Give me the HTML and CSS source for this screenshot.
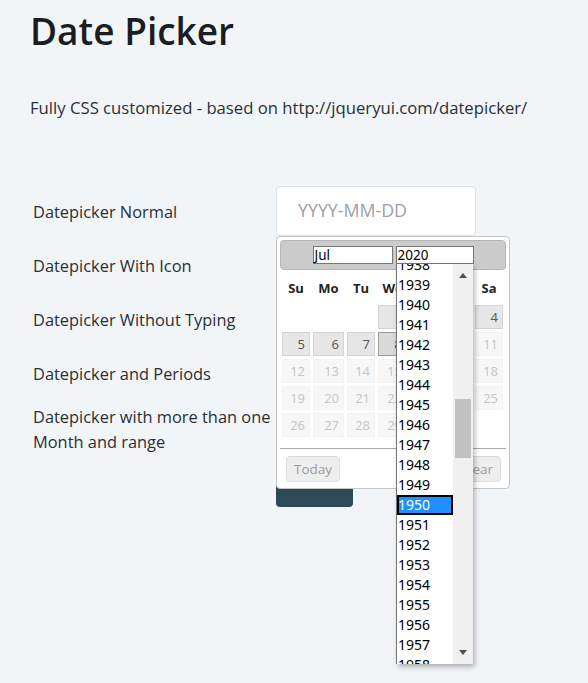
FILE: index.html
```html
<!DOCTYPE html>
<html lang="en">
<head>
<meta charset="utf-8">
<title>Date Picker</title>
<link rel="stylesheet" href="styles.css">
</head>
<body>
<div class="page">
  <h1 class="title">Date Picker</h1>
  <p class="lead">Fully CSS customized - based on http://jqueryui.com/datepicker/</p>

  <form class="form">
    <div class="row">
      <label class="label">Datepicker Normal</label>
      <div class="field">
        <input class="input" type="text" placeholder="YYYY-MM-DD">
        <div class="datepicker">
          <div class="dp-header">
            <span class="dp-select month">Jul</span>
            <span class="dp-select year">2020</span>
          </div>
          <div class="dp-grid dp-dow">
            <span>Su</span><span>Mo</span><span>Tu</span><span>We</span><span>Th</span><span>Fr</span><span>Sa</span>
          </div>
          <div class="dp-grid dp-days">
            <span class="empty"></span><span class="empty"></span><span class="empty"></span>
            <a class="day">1</a><a class="day">2</a><a class="day">3</a><a class="day">4</a>
            <a class="day">5</a><a class="day">6</a><a class="day">7</a><a class="day active">8</a><a class="day off">9</a><a class="day off">10</a><a class="day off">11</a>
            <a class="day off">12</a><a class="day off">13</a><a class="day off">14</a><a class="day off">15</a><a class="day off">16</a><a class="day off">17</a><a class="day off">18</a>
            <a class="day off">19</a><a class="day off">20</a><a class="day off">21</a><a class="day off">22</a><a class="day off">23</a><a class="day off">24</a><a class="day off">25</a>
            <a class="day off">26</a><a class="day off">27</a><a class="day off">28</a><a class="day off">29</a><a class="day off">30</a><a class="day off">31</a><span class="empty"></span>
          </div>
          <div class="dp-pane">
            <button type="button" class="dp-btn">Today</button>
            <button type="button" class="dp-btn">Clear</button>
          </div>

          <div class="dropdown">
            <div class="dd-items">
              <div class="dd-inner">
                <div class="opt">1938</div><div class="opt">1939</div><div class="opt">1940</div><div class="opt">1941</div>
                <div class="opt">1942</div><div class="opt">1943</div><div class="opt">1944</div><div class="opt">1945</div>
                <div class="opt">1946</div><div class="opt">1947</div><div class="opt">1948</div><div class="opt">1949</div>
                <div class="opt selected">1950</div><div class="opt">1951</div><div class="opt">1952</div><div class="opt">1953</div>
                <div class="opt">1954</div><div class="opt">1955</div><div class="opt">1956</div><div class="opt">1957</div>
                <div class="opt">1958</div>
              </div>
            </div>
            <div class="dd-track">
              <span class="arrow up"></span>
              <span class="thumb"></span>
              <span class="arrow down"></span>
            </div>
          </div>
        </div>
      </div>
    </div>
    <div class="row">
      <label class="label">Datepicker With Icon</label>
    </div>
    <div class="row">
      <label class="label">Datepicker Without Typing</label>
    </div>
    <div class="row">
      <label class="label">Datepicker and Periods</label>
    </div>
    <div class="row multi">
      <label class="label">Datepicker with more than one Month and range</label>
    </div>
    <div class="actions">
      <button type="button" class="save">Save</button>
    </div>
  </form>
</div>
</body>
</html>
```

FILE: styles.css
```css
* { box-sizing: border-box; }

html, body {
  min-height: 100%;
}

body {
  margin: 0;
  background: #f2f5f8;
  font-family: "Open Sans", "Noto Sans", sans-serif;
  color: #212529;
}

.page {
  min-height: 683px;
  padding: 7px 30px 0;
}

.title {
  margin: 0;
  font-size: 37px;
  line-height: 48px;
  font-weight: 600;
  color: #1b1e21;
}

.lead {
  margin: 41px 0 0;
  font-size: 16.7px;
  line-height: 24px;
  color: #2a2f36;
}

.form {
  margin-top: 64px;
}

.row {
  display: flex;
  align-items: center;
  height: 54px;
}

.row.multi {
  height: auto;
  align-items: flex-start;
  padding-top: 4px;
}

.label {
  width: 246px;
  padding-left: 3px;
  font-size: 16.4px;
  line-height: 25px;
  color: #2a2f36;
}

.field {
  position: relative;
  width: 200px;
  height: 50px;
}

.input {
  display: block;
  width: 200px;
  height: 50px;
  border: 1px solid #dde2e7;
  border-radius: 4px;
  background: #fff;
  padding: 0 0 2px 21px;
  font-family: inherit;
  font-size: 17.8px;
  color: #495057;
  outline: none;
}

.input::placeholder {
  color: #9aa1a8;
}

/* ---------- datepicker ---------- */
.datepicker {
  position: absolute;
  top: 100%;
  left: 0;
  width: 234px;
  height: 253px;
  padding: 3px;
  background: #fff;
  border: 1px solid #c5c5c5;
  border-radius: 4px;
  z-index: 5;
}

.dp-header {
  display: flex;
  justify-content: center;
  align-items: center;
  gap: 3px;
  height: 30px;
  background: #cbcbcb;
  border: 1px solid #b5b5b5;
  border-radius: 4px;
}

.dp-select {
  display: block;
  height: 18px;
  background: #fff;
  border: 1px solid #767676;
  padding-left: 1px;
  font-family: "Noto Sans", sans-serif;
  font-size: 13.5px;
  line-height: 16px;
  color: #000;
}

.dp-select.month { width: 80px; }
.dp-select.year { width: 78px; }

.dp-grid {
  display: grid;
  grid-template-columns: 28px 31px 28px 29px 30px 29px 28px;
  column-gap: 3px;
  padding-left: 2px;
}

.dp-dow {
  height: 35px;
  align-items: center;
  text-align: center;
  font-size: 13px;
  font-weight: 700;
  color: #222;
}

.dp-days {
  row-gap: 3px;
}

.day, .empty {
  display: block;
  height: 24px;
}

.day {
  border: 1px solid #d3d3d3;
  background: #e6e6e6;
  color: #555;
  text-align: right;
  padding-right: 4px;
  font-size: 13px;
  line-height: 22px;
}

.day.active {
  border-color: #999;
  background: #dadada;
  color: #212121;
}

.day.off {
  border-color: #f2f2f2;
  background: #f7f7f7;
  color: #c4c4c4;
}

.dp-pane {
  display: flex;
  justify-content: space-between;
  margin-top: 11px;
  border-top: 1px solid #a9a9a9;
  padding: 7px 5px 0 6px;
}

.dp-btn {
  height: 26px;
  padding: 0 7px;
  border: 1px solid #dcdcdc;
  border-radius: 4px;
  background: #eeeeee;
  color: #9c9c9c;
  font-family: inherit;
  font-size: 13.5px;
}

/* ---------- open year dropdown ---------- */
.dropdown {
  position: absolute;
  left: 119px;
  top: 27px;
  width: 77px;
  height: 400px;
  display: flex;
  background: #fff;
  border-left: 1px solid #767676;
  box-shadow: 2px 3px 5px rgba(0, 0, 0, 0.28);
  z-index: 10;
}

.dd-items {
  width: 56px;
  height: 400px;
  overflow: hidden;
}

.dd-inner {
  margin-top: -9px;
}

.opt {
  height: 20px;
  padding-left: 1px;
  font-family: "Noto Sans", sans-serif;
  font-size: 14px;
  line-height: 20px;
  color: #000;
}

.opt.selected {
  background: #1e90ff;
  color: #fff;
  box-shadow: inset 0 0 0 2px #000;
}

.dd-track {
  position: relative;
  width: 20px;
  height: 400px;
  background: #f0f0f0;
  display: flex;
  flex-direction: column;
  align-items: center;
}

.arrow {
  display: block;
  width: 0;
  height: 0;
  border-left: 4.5px solid transparent;
  border-right: 4.5px solid transparent;
}

.arrow.up {
  margin-top: 9px;
  border-bottom: 5px solid #505050;
}

.arrow.down {
  margin-top: auto;
  margin-bottom: 9px;
  border-top: 5px solid #505050;
}

.thumb {
  position: absolute;
  top: 135px;
  left: 2px;
  width: 16px;
  height: 59px;
  background: #c1c1c1;
}

/* ---------- actions ---------- */
.actions {
  padding-left: 246px;
  margin-top: 10px;
}

.save {
  width: 77px;
  height: 43px;
  border: none;
  border-radius: 4px;
  background: #2d4a57;
  color: #fff;
  padding: 0 0 8px;
  font-family: inherit;
  font-size: 16px;
}
```
